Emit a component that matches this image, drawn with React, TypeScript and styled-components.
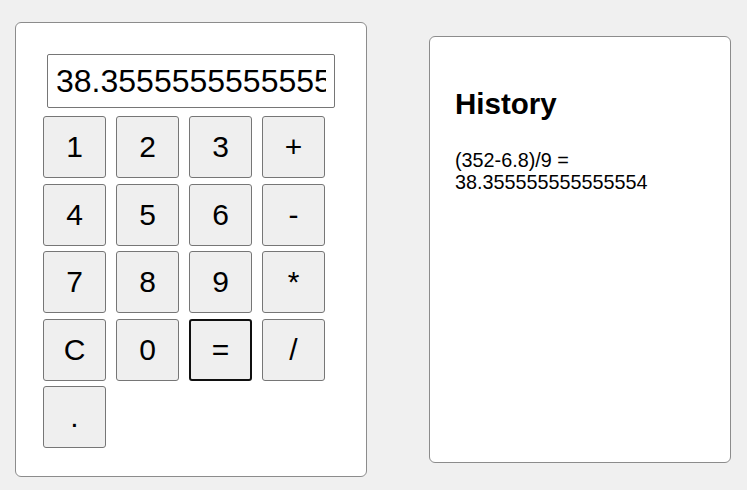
import React, { useState } from "react";
import styled, { createGlobalStyle } from "styled-components";

const GlobalStyle = createGlobalStyle`
  html, body {
    margin: 0;
    padding: 0;
    background: #f0f0f0;
    font-family: "Liberation Sans", Arial, sans-serif;
  }
  * {
    box-sizing: border-box;
  }
`;

const Page = styled.div`
  display: flex;
  align-items: center;
  gap: 62px;
  padding: 22px 16px 13px 15px;
  min-height: 490px;
`;

const Card = styled.div`
  background: #ffffff;
  border: 1px solid #8c8c8c;
  border-radius: 6px;
`;

const CalcCard = styled(Card)`
  width: 352px;
  padding: 31px 31px 28px 27px;
  display: flex;
  flex-direction: column;
  gap: 8px;
`;

const Display = styled.input`
  width: 288px;
  height: 54px;
  margin-left: 4px;
  padding: 0 8px;
  border: 1px solid #767676;
  border-radius: 2px;
  font-family: "Liberation Sans", Arial, sans-serif;
  font-size: 32px;
  color: #000;
  background: #fff;
  outline: none;
`;

const Keys = styled.div`
  display: grid;
  grid-template-columns: repeat(4, 63px);
  grid-auto-rows: 62px;
  column-gap: 10px;
  row-gap: 5.5px;
`;

const Key = styled.button<{ $focused?: boolean }>`
  display: flex;
  align-items: center;
  justify-content: center;
  padding: 0;
  background: #efefef;
  border: ${(p) => (p.$focused ? "2px solid #101010" : "1px solid #767676")};
  border-radius: 3px;
  font-family: "Liberation Sans", Arial, sans-serif;
  font-size: 30px;
  color: #000;
  cursor: pointer;
`;

const HistoryCard = styled(Card)`
  width: 302px;
  height: 427px;
  padding: 50px 26px 26px 25px;
`;

const Title = styled.h2`
  margin: 0 0 28px;
  font-size: 29.5px;
  font-weight: 700;
  color: #000;
`;

const Entry = styled.div`
  font-size: 19.8px;
  line-height: 22px;
  color: #000;
`;

const keys = ["1", "2", "3", "+", "4", "5", "6", "-", "7", "8", "9", "*", "C", "0", "=", "/", "."];

export default function App() {
  const [value] = useState("38.355555555555554");
  const history = ["(352-6.8)/9 = 38.355555555555554"];

  return (
    <>
      <GlobalStyle />
      <Page>
        <CalcCard>
          <Display readOnly value={value} />
          <Keys>
            {keys.map((k) => (
              <Key key={k} $focused={k === "="}>
                {k}
              </Key>
            ))}
          </Keys>
        </CalcCard>
        <HistoryCard>
          <Title>History</Title>
          {history.map((h) => (
            <Entry key={h}>{h}</Entry>
          ))}
        </HistoryCard>
      </Page>
    </>
  );
}
